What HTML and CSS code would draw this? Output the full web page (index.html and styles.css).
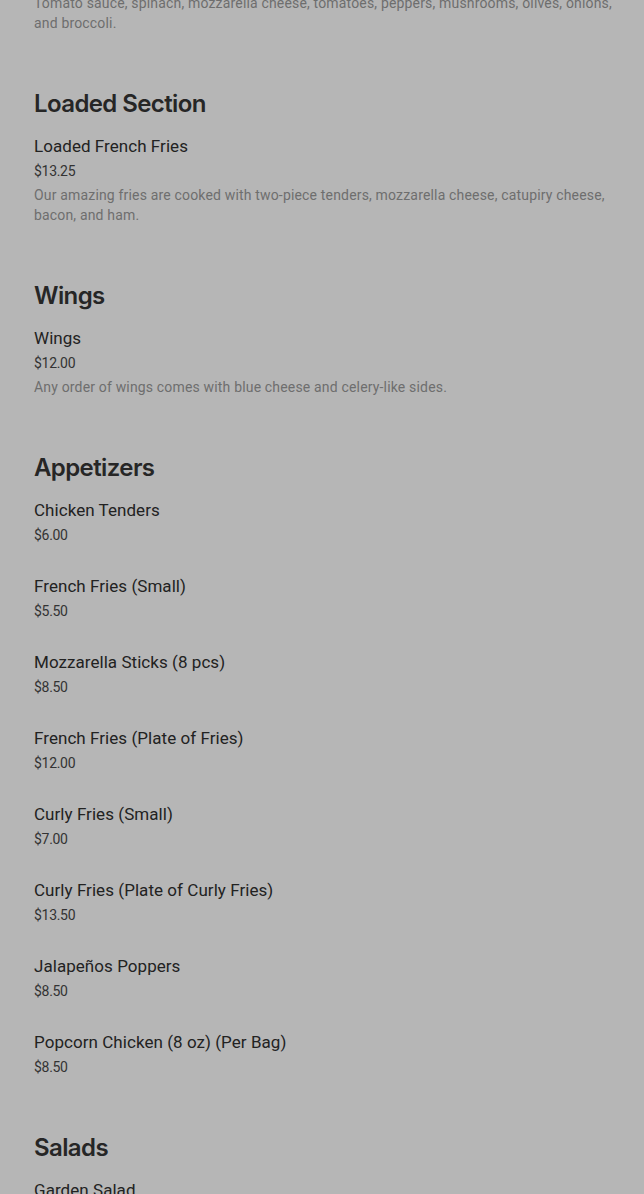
FILE: index.html
```html
<!DOCTYPE html>
<html lang="en">
<head>
<meta charset="utf-8">
<title>Menu</title>
<link rel="stylesheet" href="styles.css">
</head>
<body>
<main class="menu">
  <div class="lead-desc">Tomato sauce, spinach, mozzarella cheese, tomatoes, peppers, mushrooms, olives, onions, and broccoli.</div>

  <section class="section">
    <h2 class="section-title">Loaded Section</h2>
    <div class="items">
      <div class="item">
        <div class="item-name">Loaded French Fries</div>
        <div class="item-price">$13.25</div>
        <div class="item-desc">Our amazing fries are cooked with two-piece tenders, mozzarella cheese, catupiry cheese, bacon, and ham.</div>
      </div>
    </div>
  </section>

  <section class="section">
    <h2 class="section-title">Wings</h2>
    <div class="items">
      <div class="item">
        <div class="item-name">Wings</div>
        <div class="item-price">$12.00</div>
        <div class="item-desc">Any order of wings comes with blue cheese and celery-like sides.</div>
      </div>
    </div>
  </section>

  <section class="section">
    <h2 class="section-title">Appetizers</h2>
    <div class="items">
      <div class="item"><div class="item-name">Chicken Tenders</div><div class="item-price">$6.00</div></div>
      <div class="item"><div class="item-name">French Fries (Small)</div><div class="item-price">$5.50</div></div>
      <div class="item"><div class="item-name">Mozzarella Sticks (8 pcs)</div><div class="item-price">$8.50</div></div>
      <div class="item"><div class="item-name">French Fries (Plate of Fries)</div><div class="item-price">$12.00</div></div>
      <div class="item"><div class="item-name">Curly Fries (Small)</div><div class="item-price">$7.00</div></div>
      <div class="item"><div class="item-name">Curly Fries (Plate of Curly Fries)</div><div class="item-price">$13.50</div></div>
      <div class="item"><div class="item-name">Jalapeños Poppers</div><div class="item-price">$8.50</div></div>
      <div class="item"><div class="item-name">Popcorn Chicken (8 oz) (Per Bag)</div><div class="item-price">$8.50</div></div>
    </div>
  </section>

  <section class="section">
    <h2 class="section-title">Salads</h2>
    <div class="items">
      <div class="item"><div class="item-name">Garden Salad</div><div class="item-price">$9.00</div></div>
    </div>
  </section>
</main>
</body>
</html>
```

FILE: styles.css
```css
html, body {
  margin: 0;
  padding: 0;
  background: #b6b6b6;
}
body {
  font-family: Roboto, "Liberation Sans", sans-serif;
  overflow: hidden;
}
.menu {
  padding: 0 22px 0 34px;
}
.lead-desc,
.item-desc {
  font-size: 14px;
  line-height: 20px;
  letter-spacing: 0.17px;
  color: #6e6e6e;
}
.lead-desc {
  margin-top: -7px;
  margin-bottom: 55px;
}
.section {
  margin-bottom: 55px;
}
.section-title {
  margin: 0 0 14px;
  font-family: Inter, "Noto Sans", sans-serif;
  font-size: 24px;
  line-height: 32px;
  font-weight: 600;
  letter-spacing: -0.6px;
  color: #262626;
}
.items {
  display: flex;
  flex-direction: column;
  gap: 29px;
}
.item-name {
  font-size: 17px;
  line-height: 24px;
  font-weight: 400;
  letter-spacing: 0.05px;
  color: #222222;
}
.item-price {
  margin-top: 3px;
  font-size: 14px;
  line-height: 20px;
  letter-spacing: -0.3px;
  color: #333333;
}
.item-desc {
  margin-top: 4px;
}
```
